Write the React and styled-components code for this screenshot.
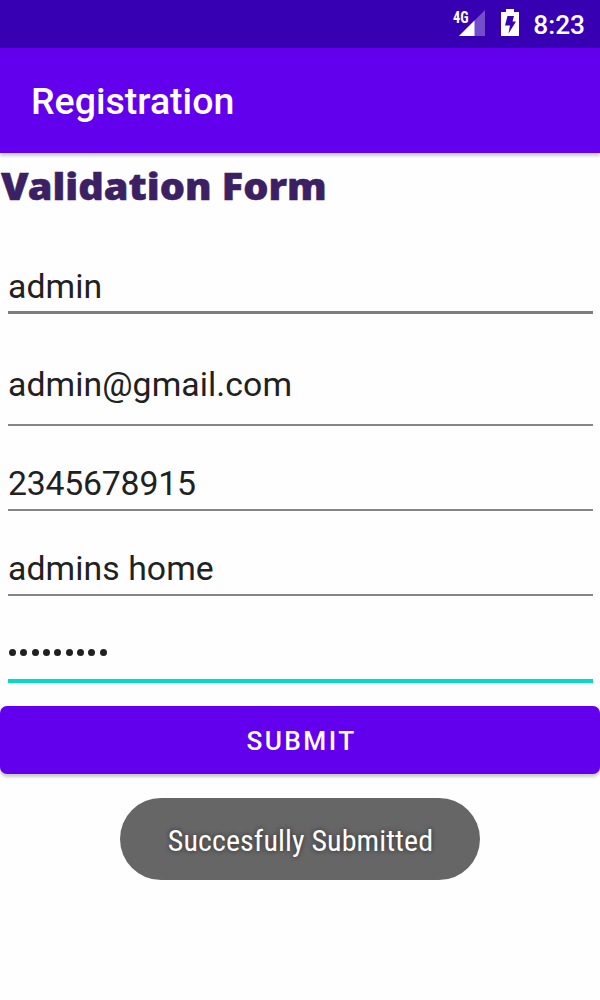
import React from "react";
import styled, { createGlobalStyle } from "styled-components";

const GlobalStyle = createGlobalStyle`
  * { box-sizing: border-box; }
  body { margin: 0; background: #fff; font-family: Roboto, sans-serif; overflow: hidden; }
`;

const Screen = styled.div`
  width: 600px;
  height: 1000px;
  display: flex;
  flex-direction: column;
  background: #fefefe;
`;

const StatusBar = styled.header`
  height: 48px;
  flex: none;
  display: flex;
  justify-content: flex-end;
  align-items: flex-start;
  padding-right: 15px;
  background: #3700b3;
`;

const StatusIcons = styled.svg`
  display: block;
  width: 72px;
  height: 48px;
  margin-right: 8px;
`;

const Clock = styled.time`
  padding-top: 10px;
  font-size: 26.25px;
  line-height: 31px;
  font-weight: 500;
  color: #fff;
`;

const AppBar = styled.div`
  height: 105px;
  flex: none;
  display: flex;
  align-items: center;
  padding: 0 0 0 31px;
  background: #6200ee;
  box-shadow: 0 3px 3px rgba(0, 0, 0, 0.2);
`;

const Title = styled.h1`
  margin: 0;
  font-size: 37.5px;
  font-weight: 500;
  line-height: 44px;
  color: #fff;
`;

const Form = styled.form`
  display: flex;
  flex-direction: column;
`;

const Heading = styled.h2`
  align-self: flex-start;
  height: 92px;
  margin: 0;
  padding: 8px 0 0 1px;
  font-family: "Noto Sans", sans-serif;
  font-size: 36.5px;
  font-weight: 900;
  line-height: 50px;
  white-space: nowrap;
  color: #3b2063;
  -webkit-text-stroke: 0.5px #3b2063;
  stroke-linejoin: round;
  transform: scaleX(1.087);
  transform-origin: left;
`;

const Field = styled.div`
  height: ${(p) => p.$height}px;
  margin: 0 7px 0 8px;
  padding-top: ${(p) => p.$top}px;
  font-size: 33.75px;
  line-height: 40px;
  letter-spacing: ${(p) => p.$spacing || 0.08}px;
  white-space: nowrap;
  color: #212121;
  border-bottom: ${(p) => p.$line || 2}px solid ${(p) => (p.$active ? "#03dac5" : p.$tone || "#858585")};
`;

const Dots = styled.span`
  display: flex;
  align-items: center;
  gap: 4.33px;
  height: 40px;
  padding-left: 1px;
`;

const Dot = styled.i`
  width: 7px;
  height: 7px;
  border-radius: 50%;
  background: #212121;
`;

const Submit = styled.button`
  height: 68px;
  margin: 23px 0 0;
  padding: 1px 0 0 3px;
  border: 0;
  border-radius: 7px;
  background: #6200ee;
  box-shadow: 0 3px 3px rgba(0, 0, 0, 0.2);
  font-family: Roboto, sans-serif;
  font-size: 26.25px;
  font-weight: 500;
  letter-spacing: 2.4px;
  color: #fff;
`;

const Toast = styled.div`
  align-self: center;
  width: 360px;
  height: 82px;
  margin-top: 24px;
  padding: 4px 0 0 1px;
  display: flex;
  align-items: center;
  justify-content: center;
  border-radius: 41px;
  background: #666;
`;

const ToastText = styled.span`
  font-family: "Roboto Condensed", Roboto, sans-serif;
  font-size: 30px;
  font-stretch: 75%;
  line-height: 36px;
  letter-spacing: 0.08px;
  white-space: nowrap;
  color: #fff;
  text-shadow: 0 0 5px rgba(0, 0, 0, 0.6);
`;

const NetworkLabel = styled.text`
  font: 700 17px "Roboto Condensed", Roboto, sans-serif;
  fill: #fff;
`;

export default function App() {
  return (
    <>
      <GlobalStyle />
      <Screen>
        <StatusBar>
          <StatusIcons viewBox="0 0 72 48">
            <NetworkLabel x="0" y="22.5" textLength="15.5" lengthAdjust="spacingAndGlyphs">4G</NetworkLabel>
            <path d="M32 10V36H6Z" fill="#fff" opacity=".3" />
            <path d="M21.5 20.5V36H6Z" fill="#fff" />
            <path
              d="M53 9h8v3h5v24H48V12h5Z M54.5 16h6.5l-1.5 5.5h3.5l-7.5 12 1.5-8h-5Z"
              fill="#fff"
              fillRule="evenodd"
            />
          </StatusIcons>
          <Clock>8:23</Clock>
        </StatusBar>
        <AppBar>
          <Title>Registration</Title>
        </AppBar>
        <Form onSubmit={(e) => e.preventDefault()}>
          <Heading>Validation Form</Heading>
          <Field $height={69} $top={22} $line={3} $tone="#7e7e7e">admin</Field>
          <Field $height={112} $top={51}>admin@gmail.com</Field>
          <Field $height={85} $top={38} $spacing={-0.2}>2345678915</Field>
          <Field $height={85} $top={38}>admins home</Field>
          <Field $height={87} $top={36} $line={4} $active>
            <Dots aria-label="Password">
              {Array.from({ length: 9 }, (_, i) => <Dot key={i} />)}
            </Dots>
          </Field>
          <Submit>SUBMIT</Submit>
        </Form>
        <Toast>
          <ToastText>Succesfully Submitted</ToastText>
        </Toast>
      </Screen>
    </>
  );
}
